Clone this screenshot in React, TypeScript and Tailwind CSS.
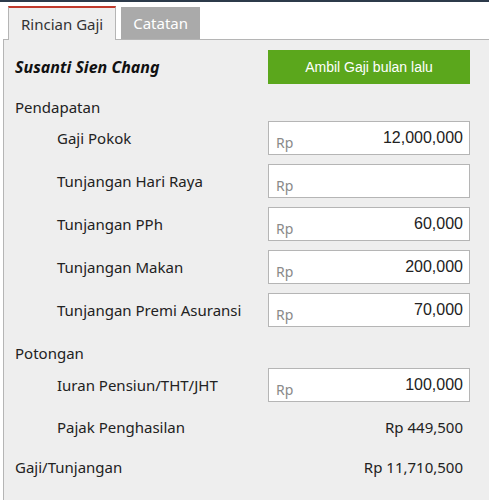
import React from "react";

const SEGOE = "font-['Noto_Sans','Open_Sans',sans-serif]";
const ARIAL = "font-['Liberation_Sans',Arial,sans-serif]";

function MoneyInput({ value }: { value?: string }) {
  return (
    <div className="w-[202px] h-[34px] bg-white border border-[#b5b5b5] flex items-center justify-between pl-[7px] pr-[6px]">
      <span className={`${SEGOE} text-[14px] text-[#8a8a8a] mt-[9px]`}>Rp</span>
      <span className={`${ARIAL} text-[16px] text-[#222]`}>{value}</span>
    </div>
  );
}

function Row({ label, children }: { label: string; children: React.ReactNode }) {
  return (
    <div className="flex items-center justify-between h-[34px] pl-[42px]">
      <span className={`${SEGOE} text-[15px] text-[#222]`}>{label}</span>
      {children}
    </div>
  );
}

export default function App() {
  const pendapatan = [
    { label: "Gaji Pokok", value: "12,000,000" },
    { label: "Tunjangan Hari Raya", value: "" },
    { label: "Tunjangan PPh", value: "60,000" },
    { label: "Tunjangan Makan", value: "200,000" },
    { label: "Tunjangan Premi Asuransi", value: "70,000" },
  ];

  return (
    <div className="w-[489px] h-[500px] bg-white overflow-hidden">
      <div className="h-[2px] bg-[#2c3a4a]" />

      {/* Tabs */}
      <div className="flex items-end gap-[5px] pl-[8px] pt-[4px] relative z-10">
        <div className={`h-[34px] px-[12px] bg-[#eeeeee] border-t-2 border-t-[#c0392b] border-l border-r border-[#b5b5b5] flex items-center ${SEGOE} text-[15px] text-[#333]`}>
          Rincian Gaji
        </div>
        <div className={`h-[32px] mb-px px-[12px] bg-[#aaaaaa] flex items-center ${SEGOE} text-[15px] text-white`}>
          Catatan
        </div>
      </div>

      {/* Panel */}
      <div className="-mt-px ml-[3px] h-[470px] bg-[#eeeeee] border-t border-l border-[#b5b5b5] pl-[11px] pr-[19px] pt-[10px]">
        <div className="flex items-center justify-between h-[34px]">
          <span className={`${SEGOE} text-[16px] font-bold italic text-[#111]`}>Susanti Sien Chang</span>
          <button className={`w-[202px] h-[34px] bg-[#5ba71c] text-white ${ARIAL} text-[14px]`}>
            Ambil Gaji bulan lalu
          </button>
        </div>

        <div className={`mt-[12px] h-[22px] flex items-center ${SEGOE} text-[15px] text-[#222]`}>Pendapatan</div>

        <div className="mt-[3px] flex flex-col gap-[9px]">
          {pendapatan.map((p) => (
            <Row key={p.label} label={p.label}>
              <MoneyInput value={p.value} />
            </Row>
          ))}
        </div>

        <div className={`mt-[15px] h-[22px] flex items-center ${SEGOE} text-[15px] text-[#222]`}>Potongan</div>

        <div className="mt-[4px] flex flex-col">
          <Row label="Iuran Pensiun/THT/JHT">
            <MoneyInput value="100,000" />
          </Row>
          <div className="mt-[8px] flex items-center justify-between h-[34px] pl-[42px] pr-[7px]">
            <span className={`${SEGOE} text-[15px] text-[#222]`}>Pajak Penghasilan</span>
            <span className={`${SEGOE} text-[15px] text-[#222]`}>Rp 449,500</span>
          </div>
          <div className="mt-[6px] flex items-center justify-between h-[34px] pr-[7px]">
            <span className={`${SEGOE} text-[15px] text-[#222]`}>Gaji/Tunjangan</span>
            <span className={`${SEGOE} text-[15px] text-[#222]`}>Rp 11,710,500</span>
          </div>
        </div>
      </div>
    </div>
  );
}
